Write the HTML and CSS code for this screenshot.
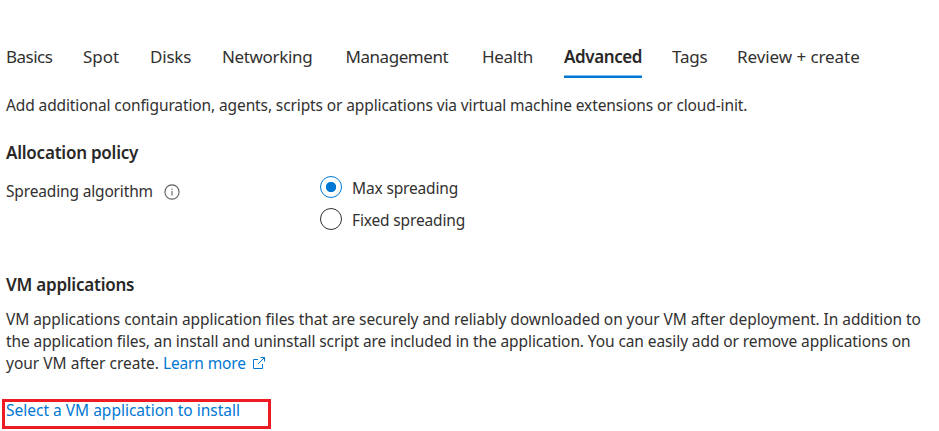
FILE: index.html
```html
<!DOCTYPE html>
<html lang="en">
<head>
<meta charset="utf-8">
<title>Create a virtual machine scale set</title>
<link rel="stylesheet" href="styles.css">
</head>
<body>
<nav class="tabs">
<a class="tab basics">Basics</a>
<a class="tab spot">Spot</a>
<a class="tab disks">Disks</a>
<a class="tab networking">Networking</a>
<a class="tab management">Management</a>
<a class="tab health">Health</a>
<a class="tab advanced active">Advanced</a>
<a class="tab tags">Tags</a>
<a class="tab review">Review + create</a>
</nav>
<main>
<p class="intro">Add additional configuration, agents, scripts or applications via virtual machine extensions or cloud-init.</p>
<h2 class="policy-title">Allocation policy</h2>
<div class="field">
<div class="label"><span class="label-text">Spreading algorithm</span><svg class="info" viewBox="0 0 16 16"><circle cx="8" cy="8" r="7.1"/><path d="M8 7v4.6M8 4.4v1.3"/></svg></div>
<div class="options">
<label class="option"><span class="radio checked"></span><span class="option-text">Max spreading</span></label>
<label class="option"><span class="radio"></span><span class="option-text">Fixed spreading</span></label>
</div>
</div>
<h2 class="apps-title">VM applications</h2>
<p class="description">
<span class="line line-one">VM applications contain application files that are securely and reliably downloaded on your VM after deployment. In addition to</span>
<span class="line line-two">the application files, an install and uninstall script are included in the application. You can easily add or remove applications on</span>
<span class="line line-three">your VM after create. <a class="link learn">Learn more<svg class="external" viewBox="0 0 14 14"><path d="M6 3.5H1.5v9h9V8M8.5 1.5h4v4M12.5 1.5L6 8"/></svg></a></span>
</p>
<div class="highlight"><a class="link select">Select a VM application to install</a></div>
</main>
</body>
</html>
```

FILE: styles.css
```css
* { box-sizing: border-box; }
body {
  margin: 0;
  background: #fff;
  color: #323130;
  font: 15.5px/22px "Noto Sans", "Open Sans", sans-serif;
  height: 431px;
  overflow: hidden;
}
h2, p { margin: 0; }
.tabs {
  display: grid;
  grid-template-columns: 77px 67px 72px 124px 136px 82px 108px 65px auto;
  padding: 43px 0 0 6px;
  height: 78px;
  font-size: 17px;
  line-height: 28px;
  white-space: nowrap;
}
.tab { justify-self: start; height: 35px; }
.basics { letter-spacing: -0.5px; }
.disks, .tags { letter-spacing: -0.2px; }
.networking { letter-spacing: -0.35px; }
.health { letter-spacing: -0.3px; }
.management { margin-left: -0.5px; letter-spacing: -0.45px; }
.review { letter-spacing: -0.07px; }
.active { width: 78px; border-bottom: 2px solid #0078d4; box-shadow: inset 0 -1px #80bce9; color: #292827; font-weight: 600; letter-spacing: -0.4px; }
main { padding-left: 6px; white-space: nowrap; }
.intro { margin-top: 16px; letter-spacing: -0.113px; }
h2 { color: #292827; font-size: 17px; line-height: 24px; font-weight: 600; letter-spacing: -0.23px; }
.policy-title { margin-top: 25px; }
.field { display: flex; margin-top: 10px; height: 64px; }
.label { display: flex; width: 314px; padding-top: 5px; }
.label-text { width: 147px; letter-spacing: -0.16px; }
.info { width: 16px; height: 16px; margin: 4px 0 0 11px; fill: none; stroke: #605e5c; stroke-width: 1.1; }
.option { display: flex; height: 32px; align-items: flex-start; gap: 10px; }
.option-text { padding-top: 1px; letter-spacing: -0.15px; }
.radio { width: 22px; height: 22px; border: 1px solid #323130; border-radius: 50%; }
.radio.checked { border-color: #0078d4; background: radial-gradient(circle, #0078d4 4.8px, transparent 5.5px); }
.options { padding-top: 1px; }
.apps-title { margin-top: 34px; }
.description { margin-top: 11px; }
.line { display: block; }
.line-one { letter-spacing: -0.07px; }
.line-two { letter-spacing: -0.1px; }
.link { color: #0078d4; }
.learn { letter-spacing: -0.15px; }
.external { width: 14px; height: 14px; margin-left: 6px; vertical-align: -1px; fill: none; stroke: #0078d4; stroke-width: 1; }
.highlight { width: 269px; height: 30px; margin: 25px 0 0 -4px; border: 3px solid #ed1c24; padding-left: 1px; line-height: 16px; }
```
